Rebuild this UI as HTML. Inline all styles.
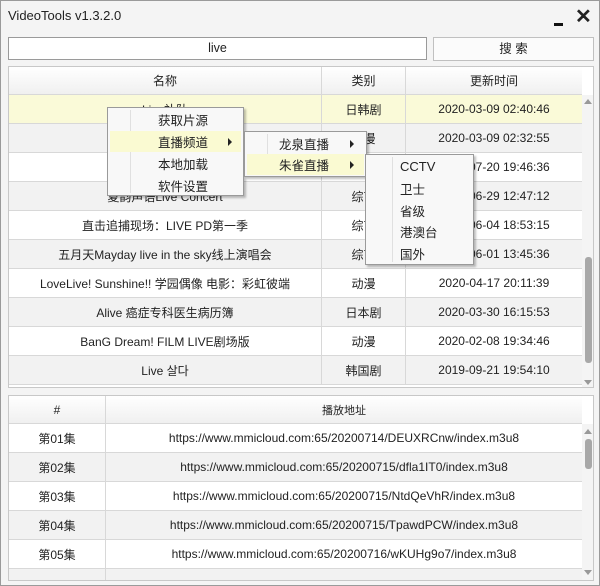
<!DOCTYPE html>
<html><head><meta charset="utf-8"><style>
*{margin:0;padding:0;box-sizing:border-box}
body{width:600px;height:586px;overflow:hidden;background:#f4f4f4;font-family:"Liberation Sans","Noto Sans CJK SC",sans-serif;font-size:12px;color:#222;position:relative}
.win{position:absolute;left:0;top:0;width:600px;height:586px;border:1px solid #9a9a9a}
.a{position:absolute}
.tbl{position:absolute;border:1px solid #c8c8c8;background:#fff;overflow:hidden}
.row{position:absolute;left:0;height:29px;border-bottom:1px solid #d8d8d8}
.c{position:absolute;top:0;height:100%;display:flex;align-items:center;justify-content:center;white-space:nowrap;border-right:1px solid #d8d8d8}
.g{background:#f2f2f2}.w{background:#fff}.y{background:#fafad8}
.menu{position:absolute;background:#f8f8f8;border:1px solid #9a9a9a;box-shadow:2px 2px 2px rgba(0,0,0,.25)}
.mi{position:absolute;left:2px;right:2px;height:21px;display:flex;align-items:center;font-size:12.5px}
.sep{position:absolute;top:2px;bottom:2px;width:1px;background:#e0e0e0}
.arr{position:absolute;width:0;height:0;border-top:4px solid transparent;border-bottom:4px solid transparent;border-left:4px solid #222}
</style></head><body><div class="win">
<div class="a" style="left:7px;top:7px;font-size:13px">VideoTools v1.3.2.0</div>
<div class="a" style="left:553px;top:22px;width:9px;height:3px;background:#111"></div>
<div class="a" style="left:574px;top:3px;font-size:20px;font-weight:bold">✕</div>
<div class="a" style="left:7px;top:36px;width:419px;height:23px;border:1px solid #9a9a9a;background:#fff;text-align:center;line-height:21px;font-size:12.5px">live</div>
<div class="a" style="left:432px;top:36px;width:161px;height:24px;border:1px solid #c0c0c0;background:#fbfbfb;text-align:center;line-height:22px;font-size:12.5px">搜 索</div>

<div class="tbl" style="left:7px;top:65px;width:586px;height:322px">
 <div class="row" style="top:0;width:573px;height:28px;background:linear-gradient(#fff,#f0f0f0)"><div class="c" style="left:0;width:313px">名称</div><div class="c" style="left:313px;width:84px">类别</div><div class="c" style="left:397px;width:176px;border-right:none">更新时间</div></div>
 <div class="row y" style="top:28px;width:573px"><div class="c" style="left:0;width:313px">Live补队</div><div class="c" style="left:313px;width:84px">日韩剧</div><div class="c" style="left:397px;width:176px;border-right:none">2020-03-09 02:40:46</div></div>
 <div class="row g" style="top:57px;width:573px"><div class="c" style="left:0;width:313px">LoveLive!</div><div class="c" style="left:313px;width:84px">动漫</div><div class="c" style="left:397px;width:176px;border-right:none">2020-03-09 02:32:55</div></div>
 <div class="row w" style="top:86px;width:573px"><div class="c" style="left:0;width:313px">Live</div><div class="c" style="left:313px;width:84px">综艺</div><div class="c" style="left:397px;width:176px;border-right:none">2020-07-20 19:46:36</div></div>
 <div class="row g" style="top:115px;width:573px"><div class="c" style="left:0;width:313px">夏韵声语Live Concert</div><div class="c" style="left:313px;width:84px">综艺</div><div class="c" style="left:397px;width:176px;border-right:none">2020-06-29 12:47:12</div></div>
 <div class="row w" style="top:144px;width:573px"><div class="c" style="left:0;width:313px">直击追捕现场：LIVE PD第一季</div><div class="c" style="left:313px;width:84px">综艺</div><div class="c" style="left:397px;width:176px;border-right:none">2020-06-04 18:53:15</div></div>
 <div class="row g" style="top:173px;width:573px"><div class="c" style="left:0;width:313px">五月天Mayday live in the sky线上演唱会</div><div class="c" style="left:313px;width:84px">综艺</div><div class="c" style="left:397px;width:176px;border-right:none">2020-06-01 13:45:36</div></div>
 <div class="row w" style="top:202px;width:573px"><div class="c" style="left:0;width:313px">LoveLive! Sunshine!! 学园偶像 电影：彩虹彼端</div><div class="c" style="left:313px;width:84px">动漫</div><div class="c" style="left:397px;width:176px;border-right:none">2020-04-17 20:11:39</div></div>
 <div class="row g" style="top:231px;width:573px"><div class="c" style="left:0;width:313px">Alive 癌症专科医生病历簿</div><div class="c" style="left:313px;width:84px">日本剧</div><div class="c" style="left:397px;width:176px;border-right:none">2020-03-30 16:15:53</div></div>
 <div class="row w" style="top:260px;width:573px"><div class="c" style="left:0;width:313px">BanG Dream! FILM LIVE剧场版</div><div class="c" style="left:313px;width:84px">动漫</div><div class="c" style="left:397px;width:176px;border-right:none">2020-02-08 19:34:46</div></div>
 <div class="row g" style="top:289px;width:573px"><div class="c" style="left:0;width:313px">Live 살다</div><div class="c" style="left:313px;width:84px">韩国剧</div><div class="c" style="left:397px;width:176px;border-right:none">2019-09-21 19:54:10</div></div>
 <div class="a" style="left:573px;top:28px;width:12px;height:294px;background:#f4f4f4"></div>
 <div class="a" style="left:575px;top:32px;border-left:4px solid transparent;border-right:4px solid transparent;border-bottom:5px solid #999"></div>
 <div class="a" style="left:576px;top:190px;width:7px;height:106px;background:#a8a8a8;border-radius:3px"></div>
 <div class="a" style="left:575px;top:313px;border-left:4px solid transparent;border-right:4px solid transparent;border-top:5px solid #999"></div>
</div>

<div class="tbl" style="left:7px;top:394px;width:586px;height:186px">
 <div class="row" style="top:0;width:573px;height:28px;background:linear-gradient(#fff,#f0f0f0)"><div class="c" style="left:0;width:97px">#</div><div class="c" style="left:97px;width:476px;border-right:none;font-size:11px">播放地址</div></div>
 <div class="row w" style="top:28px;width:573px"><div class="c" style="left:0;width:97px">第01集</div><div class="c" style="left:97px;width:476px;border-right:none">https://www.mmicloud.com:65/20200714/DEUXRCnw/index.m3u8</div></div>
 <div class="row g" style="top:57px;width:573px"><div class="c" style="left:0;width:97px">第02集</div><div class="c" style="left:97px;width:476px;border-right:none">https://www.mmicloud.com:65/20200715/dfla1IT0/index.m3u8</div></div>
 <div class="row w" style="top:86px;width:573px"><div class="c" style="left:0;width:97px">第03集</div><div class="c" style="left:97px;width:476px;border-right:none">https://www.mmicloud.com:65/20200715/NtdQeVhR/index.m3u8</div></div>
 <div class="row g" style="top:115px;width:573px"><div class="c" style="left:0;width:97px">第04集</div><div class="c" style="left:97px;width:476px;border-right:none">https://www.mmicloud.com:65/20200715/TpawdPCW/index.m3u8</div></div>
 <div class="row w" style="top:144px;width:573px"><div class="c" style="left:0;width:97px">第05集</div><div class="c" style="left:97px;width:476px;border-right:none">https://www.mmicloud.com:65/20200716/wKUHg9o7/index.m3u8</div></div>
 <div class="row g" style="top:173px;width:573px"><div class="c" style="left:0;width:97px"></div></div>
 <div class="a" style="left:573px;top:28px;width:12px;height:158px;background:#f4f4f4"></div>
 <div class="a" style="left:575px;top:33px;border-left:4px solid transparent;border-right:4px solid transparent;border-bottom:5px solid #999"></div>
 <div class="a" style="left:576px;top:43px;width:7px;height:30px;background:#a8a8a8;border-radius:3px"></div>
 <div class="a" style="left:575px;top:174px;border-left:4px solid transparent;border-right:4px solid transparent;border-top:5px solid #999"></div>
</div>

<div class="menu" style="left:106px;top:106px;width:137px;height:89px">
 <div class="sep" style="left:22px"></div>
 <div class="mi" style="top:1px;padding-left:48px">获取片源</div>
 <div class="mi" style="top:23px;padding-left:48px;background:#fafad2">直播频道<div class="arr" style="left:118px;top:7px"></div></div>
 <div class="mi" style="top:45px;padding-left:48px">本地加载</div>
 <div class="mi" style="top:67px;padding-left:48px">软件设置</div>
</div>
<div class="menu" style="left:243px;top:130px;width:123px;height:46px">
 <div class="sep" style="left:22px"></div>
 <div class="mi" style="top:1px;padding-left:32px">龙泉直播<div class="arr" style="left:103px;top:7px"></div></div>
 <div class="mi" style="top:22px;padding-left:32px;background:#fafad2">朱雀直播<div class="arr" style="left:103px;top:7px"></div></div>
</div>
<div class="menu" style="left:364px;top:153px;width:109px;height:111px">
 <div class="sep" style="left:26px"></div>
 <div class="mi" style="top:1px;padding-left:32px;font-size:13px">CCTV</div>
 <div class="mi" style="top:23px;padding-left:32px">卫士</div>
 <div class="mi" style="top:45px;padding-left:32px">省级</div>
 <div class="mi" style="top:66px;padding-left:32px">港澳台</div>
 <div class="mi" style="top:88px;padding-left:32px">国外</div>
</div>
</div></body></html>
